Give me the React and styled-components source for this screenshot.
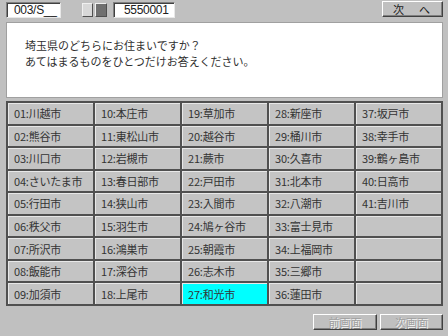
import React from 'react';
import styled, { createGlobalStyle } from 'styled-components';

const GlobalStyle = createGlobalStyle`
  html, body {
    margin: 0;
    padding: 0;
    background: #c0c0c0;
  }
  body {
    font-family: "Noto Sans CJK JP", "Liberation Sans", sans-serif;
  }
`;

const Screen = styled.div`
  width: 448px;
  height: 336px;
  box-sizing: border-box;
  padding: 1px 5px 0 6px;
  display: flex;
  flex-direction: column;
  background: #c0c0c0;
`;

const TopBar = styled.div`
  height: 17px;
  display: flex;
  align-items: flex-start;
`;

const Field = styled.div`
  box-sizing: border-box;
  width: ${(p) => p.w}px;
  height: 16px;
  margin-top: 1px;
  margin-left: ${(p) => p.ml || 0}px;
  padding-left: ${(p) => p.pl}px;
  background: #fff;
  border-top: 1px solid #808080;
  border-left: 1px solid #808080;
  border-right: 1px solid #e8e8e8;
  border-bottom: 1px solid #e8e8e8;
  box-shadow: inset 1px 1px 0 #404040;
  font-family: "Liberation Sans", Arial, sans-serif;
  font-size: 12px;
  line-height: 14px;
  color: #202020;
  letter-spacing: -0.3px;
`;

const Knob = styled.div`
  box-sizing: border-box;
  width: ${(p) => p.w}px;
  height: 14px;
  margin-top: 2px;
  margin-left: ${(p) => p.ml}px;
  background: ${(p) => (p.dark ? '#707070' : '#d8d8d8')};
  border: 1px solid;
  border-color: #f0f0f0 #505050 #505050 #f0f0f0;
`;

const Spacer = styled.div`
  flex: 1;
`;

const Button = styled.button`
  box-sizing: border-box;
  width: ${(p) => p.w}px;
  height: 16px;
  margin: 0;
  margin-left: ${(p) => p.ml || 0}px;
  padding: 0;
  background: #c0c0c0;
  border: 1px solid;
  border-color: #ffffff #404040 #404040 #ffffff;
  box-shadow: inset -1px -1px 0 #808080;
  font-family: "Noto Sans CJK JP", sans-serif;
  font-size: 11px;
  line-height: 13px;
  color: ${(p) => (p.disabled ? '#a0a0a0' : '#202020')};
  text-shadow: ${(p) => (p.disabled ? '1px 1px 0 #f4f4f4' : 'none')};
  letter-spacing: ${(p) => p.ls || 0}px;
  white-space: pre;
  display: flex;
  align-items: center;
  justify-content: center;
`;

const Question = styled.div`
  box-sizing: border-box;
  margin-top: 4px;
  height: 76px;
  background: #fff;
  border: 1px solid #a0a0a0;
  padding: 14px 0 0 18px;
  display: flex;
  flex-direction: column;
`;

const Line = styled.div`
  height: 16px;
  font-size: 11px;
  line-height: 16px;
  color: #303030;
`;

const Grid = styled.div`
  box-sizing: border-box;
  margin-top: 3px;
  height: 205px;
  display: grid;
  grid-template-columns: repeat(5, 1fr);
  grid-template-rows: repeat(9, 1fr);
  grid-auto-flow: column;
  border-top: 2px solid #505050;
  border-left: 2px solid #505050;
`;

const Cell = styled.div`
  box-sizing: border-box;
  display: flex;
  align-items: center;
  padding-left: 6px;
  background: ${(p) => (p.active ? '#00ffff' : '#c4c4c4')};
  border-right: 2px solid #505050;
  border-bottom: 2px solid #505050;
  box-shadow: inset 1px 1px 0 #e8e8e8;
  font-size: 11px;
  color: #333333;
  white-space: nowrap;
  letter-spacing: -0.2px;
`;

const BottomBar = styled.div`
  margin-top: 8px;
  display: flex;
  justify-content: flex-end;
`;

const cities = [
  '01:川越市', '02:熊谷市', '03:川口市', '04:さいたま市', '05:行田市', '06:秩父市', '07:所沢市', '08:飯能市', '09:加須市',
  '10:本庄市', '11:東松山市', '12:岩槻市', '13:春日部市', '14:狭山市', '15:羽生市', '16:鴻巣市', '17:深谷市', '18:上尾市',
  '19:草加市', '20:越谷市', '21:蕨市', '22:戸田市', '23:入間市', '24:鳩ヶ谷市', '25:朝霞市', '26:志木市', '27:和光市',
  '28:新座市', '29:桶川市', '30:久喜市', '31:北本市', '32:八潮市', '33:富士見市', '34:上福岡市', '35:三郷市', '36:蓮田市',
  '37:坂戸市', '38:幸手市', '39:鶴ヶ島市', '40:日高市', '41:吉川市', '', '', '', '',
];

export default function App() {
  return (
    <Screen>
      <GlobalStyle />
      <TopBar>
        <Field w={55} pl={7}>003/S__</Field>
        <Knob w={11} ml={21} />
        <Knob w={12} ml={2} dark />
        <Field w={62} ml={6} pl={10}>5550001</Field>
        <Spacer />
        <Button w={61} ls={2}>{'次　へ'}</Button>
      </TopBar>
      <Question>
        <Line>埼玉県のどちらにお住まいですか？</Line>
        <Line>あてはまるものをひとつだけお答えください。</Line>
      </Question>
      <Grid>
        {cities.map((c, i) => (
          <Cell key={i} active={c.startsWith('27')}>{c}</Cell>
        ))}
      </Grid>
      <BottomBar>
        <Button w={64} disabled>前画面</Button>
        <Button w={63} ml={3} disabled>次画面</Button>
      </BottomBar>
    </Screen>
  );
}
